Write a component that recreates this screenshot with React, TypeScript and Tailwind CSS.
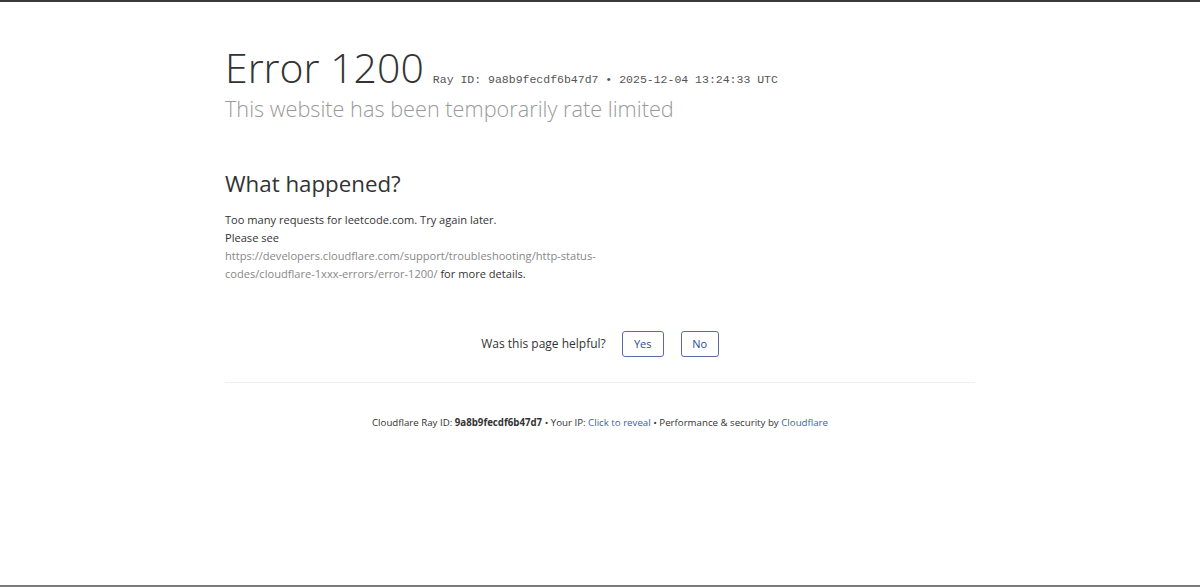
import React from 'react';

// Pagina de error de Cloudflare (1200 - rate limited)
const rayId = '9a8b9fecdf6b47d7';

const App: React.FC = () => {
  return (
    <div className="min-h-[587px] bg-white border-t-2 border-b-2 border-t-[#3a3a3a] border-b-[#7a7a7a] font-['Open_Sans','Noto_Sans',sans-serif] text-[#333]">
      <div className="mx-auto w-[750px] pt-[38px]">
        <div className="flex items-baseline">
          <h1 className="text-[41px] font-light leading-[54px] text-[#333]">Error 1200</h1>
          <span className="ml-[9px] font-['Liberation_Mono',monospace] text-[11.5px] text-[#555]">
            Ray ID: {rayId} • 2025-12-04 13:24:33 UTC
          </span>
        </div>
        <h2 className="text-[21.7px] font-light leading-[30px] text-[#999]">
          This website has been temporarily rate limited
        </h2>

        <div className="mt-[44px]">
          <h2 className="text-[22.3px] font-normal leading-[32px] text-[#333]">What happened?</h2>
          <div className="mt-[11px] w-[380px] text-[11.1px] leading-[18px]">
            <p>Too many requests for leetcode.com. Try again later.</p>
            <p>
              Please see{' '}
              <a href="#" className="text-[#888]">
                https://developers.cloudflare.com/support/troubleshooting/http-status-codes/cloudflare-1xxx-errors/error-1200/
              </a>{' '}
              for more details.
            </p>
          </div>
        </div>

        <div className="mt-[48px] flex items-center justify-center text-[12px]">
          <span className="mr-[16px]">Was this page helpful?</span>
          <button className="h-[26px] w-[42px] rounded-[3px] border border-[#5a6aa8] text-[11px] text-[#2d4a9a]">
            Yes
          </button>
          <button className="ml-[17px] h-[26px] w-[38px] rounded-[3px] border border-[#5a6aa8] text-[11px] text-[#2d4a9a]">
            No
          </button>
        </div>

        <hr className="mt-[25px] border-t border-[#eee]" />

        <p className="mt-[33px] text-center text-[9.7px]">
          Cloudflare Ray ID: <strong className="font-bold">{rayId}</strong> • Your IP:{' '}
          <a href="#" className="text-[#3a64a8]">Click to reveal</a> • Performance &amp; security by{' '}
          <a href="#" className="text-[#3a64a8]">Cloudflare</a>
        </p>
      </div>
    </div>
  );
};

export default App;
